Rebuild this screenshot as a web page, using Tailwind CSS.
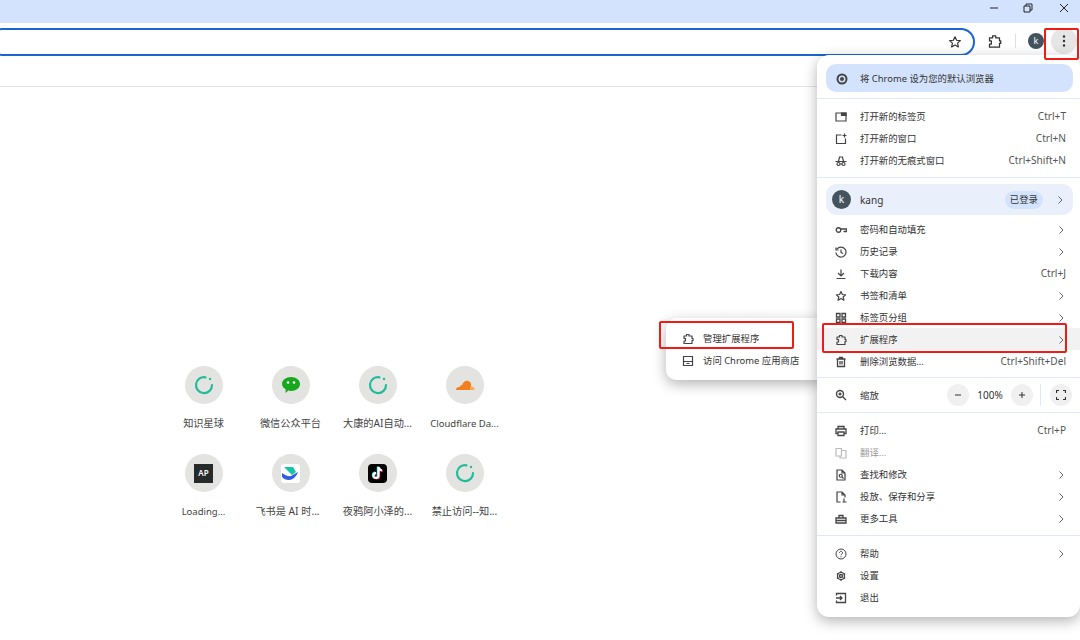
<!DOCTYPE html>
<html lang="zh-CN">
<head>
    <meta charset="UTF-8">
    <title>Chrome 菜单</title>
    <script src="https://cdn.jsdelivr.net/npm/@tailwindcss/browser@4"></script>
</head>
<body class="relative w-[1080px] h-[640px] overflow-hidden bg-white font-['Noto_Sans','Noto_Sans_CJK_SC',sans-serif] text-[#333]">
    <!-- Title bar -->
    <header class="h-[23px] bg-[#d3e3fd] flex items-center justify-end text-[#222]">
        <svg class="w-[12px] h-[12px] mr-[22px] -mt-2" viewBox="0 0 12 12" fill="none" stroke="currentColor"><path d="M2 6h8"/></svg>
        <svg class="w-[12px] h-[12px] mr-[24px] -mt-2" viewBox="0 0 12 12" fill="none" stroke="currentColor"><path d="M2 4h6v6H2zM4 4V2h6v6H8"/></svg>
        <svg class="w-[12px] h-[12px] mr-[10px] -mt-2" viewBox="0 0 12 12" fill="none" stroke="currentColor"><path d="M2 2l8 8M10 2l-8 8"/></svg>
    </header>

    <!-- Toolbar -->
    <div class="h-[36px] flex items-center">
        <div class="ml-[-12px] w-[987px] h-[28px] mt-[1px] border-2 border-[#1a66d0] rounded-[14px] flex items-center justify-end pr-[11px] shrink-0">
            <svg class="w-[14px] h-[14px] text-[#333]" viewBox="0 0 24 24" fill="none" stroke="currentColor" stroke-width="2" stroke-linejoin="round"><path d="M12 3l2.800 6 6.400.7-4.800 4.300 1.400 6.400L12 17.100l-5.800 3.300 1.400-6.400L2.800 9.700 9.200 9z"/></svg>
        </div>
        <svg class="w-[15px] h-[15px] ml-[12px] text-[#333]" viewBox="0 0 24 24" fill="none" stroke="currentColor" stroke-width="2" stroke-linejoin="round"><path d="M4 6h5V3h5v3h6v5h2v4h-2v6H4v-5h3v-5H4z"/></svg>
        <span class="w-px h-[14px] bg-[#d3e3fd] ml-[13px]"></span>
        <span class="w-[16px] h-[16px] ml-[12px] rounded-full bg-[#44545f] text-white text-[9px] flex items-center justify-center">k</span>
        <span class="w-[26px] h-[26px] ml-[7px] rounded-full bg-[#e6e6e6] flex items-center justify-center">
            <svg class="w-[4px] h-[14px]" viewBox="0 0 4 14" fill="#333"><circle cx="2" cy="2.500" r="1.200"/><circle cx="2" cy="7" r="1.200"/><circle cx="2" cy="11.500" r="1.200"/></svg>
        </span>
    </div>

    <!-- Bookmarks bar -->
    <div class="h-[28px] border-b border-[#e4e4e4]"></div>

    <!-- New tab page shortcuts -->
    <main class="ml-[160px] pt-[279px] grid grid-cols-[87px_87px_87px_87px] auto-rows-[88px] text-[10.200px] text-[#444]">
        <div class="flex flex-col items-center">
            <span class="w-[38px] h-[38px] rounded-full bg-[#e3e4e2] flex items-center justify-center">
                <svg class="w-[20px] h-[20px]" viewBox="0 0 20 20" fill="none" stroke="#22bd98" stroke-width="2.200" stroke-linecap="round"><path d="M11.500 2.300A8 8 0 1 0 18 10"/><circle cx="16" cy="4" r="1.200" fill="#22bd98" stroke="none"/></svg>
            </span>
            <span class="mt-[12px]">知识星球</span>
        </div>
        <div class="flex flex-col items-center">
            <span class="w-[38px] h-[38px] rounded-full bg-[#e3e4e2] flex items-center justify-center">
                <svg class="w-[20px] h-[20px]" viewBox="0 0 20 20"><path d="M10 2c5 0 9 3 9 7s-4 7-9 7c-1 0-1.800-.1-2.600-.4L4.500 18l.2-3.700C2.500 13 1 11.100 1 9c0-4 4-7 9-7z" fill="#18a81e"/><circle cx="7" cy="7.500" r="1.300" fill="#fff"/><circle cx="13" cy="7.500" r="1.300" fill="#fff"/></svg>
            </span>
            <span class="mt-[12px]">微信公众平台</span>
        </div>
        <div class="flex flex-col items-center">
            <span class="w-[38px] h-[38px] rounded-full bg-[#e3e4e2] flex items-center justify-center">
                <svg class="w-[20px] h-[20px]" viewBox="0 0 20 20" fill="none" stroke="#22bd98" stroke-width="2.200" stroke-linecap="round"><path d="M11.500 2.300A8 8 0 1 0 18 10"/><circle cx="16" cy="4" r="1.200" fill="#22bd98" stroke="none"/></svg>
            </span>
            <span class="mt-[12px]">大康的AI自动...</span>
        </div>
        <div class="flex flex-col items-center">
            <span class="w-[38px] h-[38px] rounded-full bg-[#e3e4e2] flex items-center justify-center">
                <svg class="w-[20px] h-[12px]" viewBox="0 0 20 12"><path d="M1 11c0-1.800 1.200-3 3-3 .3 0 .5 0 .7.100C5 6.800 6 6.200 7 6.300 8 3 10.200 1.500 12.500 1.800c2 .2 3.500 1.800 3.700 3.700l-1 5.500z" fill="#f38020"/><path d="M15 11l.7-3.300c2-.5 3.800.9 4 3.300z" fill="#fbad41"/></svg>
            </span>
            <span class="mt-[12px] text-[9.500px] leading-[15px]">Cloudflare Da...</span>
        </div>
        <div class="flex flex-col items-center">
            <span class="w-[38px] h-[38px] rounded-full bg-[#e3e4e2] flex items-center justify-center">
                <span class="w-[19px] h-[19px] bg-[#262a2b] text-white text-[8px] font-semibold flex items-center justify-center">AP</span>
            </span>
            <span class="mt-[12px] text-[9.500px] leading-[15px]">Loading...</span>
        </div>
        <div class="flex flex-col items-center">
            <span class="w-[38px] h-[38px] rounded-full bg-[#e3e4e2] flex items-center justify-center">
                <span class="w-[19px] h-[19px] rounded-[3px] bg-white flex items-center justify-center">
                    <svg class="w-[17px] h-[15px]" viewBox="0 0 17 15"><path d="M2 1h9l3 5-4 3z" fill="#14c4a6"/><path d="M0 7c3 2.500 6 3.500 9 3l7-4c-1.500 4-4.500 8-9 8-3 0-5.500-1-7-3z" fill="#2f5fe0"/></svg>
                </span>
            </span>
            <span class="mt-[12px] mr-[6px]">飞书是 AI 时...</span>
        </div>
        <div class="flex flex-col items-center">
            <span class="w-[38px] h-[38px] rounded-full bg-[#e3e4e2] flex items-center justify-center">
                <span class="w-[19px] h-[19px] rounded-[4px] bg-black flex items-center justify-center">
                    <svg class="w-[13px] h-[14px]" viewBox="0 0 13 14" fill="none" stroke-width="2"><path d="M7.500 1v8.500a2.500 2.500 0 1 1-2.500-2.500M7.500 1c.3 2 1.500 3.200 3.500 3.500" stroke="#25f4ee" transform="translate(-.7 -.4)"/><path d="M7.500 1v8.500a2.500 2.500 0 1 1-2.500-2.500M7.500 1c.3 2 1.500 3.200 3.500 3.500" stroke="#fe2c55" transform="translate(.7 .4)"/><path d="M7.500 1v8.500a2.500 2.500 0 1 1-2.500-2.500M7.500 1c.3 2 1.500 3.200 3.500 3.500" stroke="#fff"/></svg>
                </span>
            </span>
            <span class="mt-[12px]">夜鸦阿小泽的...</span>
        </div>
        <div class="flex flex-col items-center">
            <span class="w-[38px] h-[38px] rounded-full bg-[#e3e4e2] flex items-center justify-center">
                <svg class="w-[20px] h-[20px]" viewBox="0 0 20 20" fill="none" stroke="#22bd98" stroke-width="2.200" stroke-linecap="round"><path d="M11.500 2.300A8 8 0 1 0 18 10"/><circle cx="16" cy="4" r="1.200" fill="#22bd98" stroke="none"/></svg>
            </span>
            <span class="mt-[12px]">禁止访问--知...</span>
        </div>
    </main>

    <!-- Extensions submenu -->
    <div class="absolute left-[666px] top-[318px] w-[160px] h-[62px] bg-white rounded-[10px] shadow-[0_4px_14px_rgba(0,0,0,0.3)] py-[9px] text-[9.400px]">
        <div class="h-[22px] pt-[2px] flex items-center pl-[16px]">
            <svg class="w-[12px] h-[12px] text-[#444]" viewBox="0 0 24 24" fill="none" stroke="currentColor" stroke-width="2.400" stroke-linejoin="round"><path d="M4 6h5V3h5v3h6v5h2v4h-2v6H4v-5h3v-5H4z"/></svg>
            <span class="ml-[9px]">管理扩展程序</span>
        </div>
        <div class="h-[22px] pt-[2px] flex items-center pl-[16px]">
            <svg class="w-[12px] h-[12px] text-[#444]" viewBox="0 0 24 24" fill="none" stroke="currentColor" stroke-width="2.400"><path d="M3 3h18v18H3zM3 13h18M9 17h6"/></svg>
            <span class="ml-[9px]">访问 Chrome 应用商店</span>
        </div>
    </div>

    <!-- Main menu -->
    <div class="absolute left-[817px] top-[55px] w-[263px] h-[562px] bg-white rounded-[12px] shadow-[0_4px_14px_rgba(0,0,0,0.3)] text-[9.400px] pt-[9px]">
        <div class="mx-[9px] w-[247px] h-[28px] pt-[2px] rounded-[10px] bg-[#d3e3fd] flex items-center pl-[10px]">
            <svg class="w-[12px] h-[12px] text-[#444]" viewBox="0 0 24 24" fill="none" stroke="currentColor" stroke-width="4"><circle cx="12" cy="12" r="9"/><circle cx="12" cy="12" r="2" fill="currentColor"/></svg>
            <span class="ml-[12px]">将 Chrome 设为您的默认浏览器</span>
        </div>
        <div class="h-px bg-[#dde8fa] mt-[6px] mb-[6px]"></div>

        <div class="h-[22px] pt-[2px] flex items-center pl-[18px] pr-[14px]">
            <svg class="w-[12px] h-[12px] text-[#444]" viewBox="0 0 24 24" fill="none" stroke="currentColor" stroke-width="2.400"><path d="M2 4h20v16H2z"/><path d="M13 4h9v5h-9z" fill="currentColor"/></svg>
            <span class="ml-[13px]">打开新的标签页</span><span class="ml-auto text-[10.100px] text-[#555]">Ctrl+T</span>
        </div>
        <div class="h-[22px] pt-[2px] flex items-center pl-[18px] pr-[14px]">
            <svg class="w-[12px] h-[12px] text-[#444]" viewBox="0 0 24 24" fill="none" stroke="currentColor" stroke-width="2.400"><path d="M13 4H3v17h18V11M19 1v8M15 5h8"/></svg>
            <span class="ml-[13px]">打开新的窗口</span><span class="ml-auto text-[10.100px] text-[#555]">Ctrl+N</span>
        </div>
        <div class="h-[22px] pt-[2px] flex items-center pl-[18px] pr-[14px]">
            <svg class="w-[12px] h-[12px] text-[#444]" viewBox="0 0 24 24" fill="none" stroke="currentColor" stroke-width="2.400"><path d="M1 13h22M7 13l2-9h6l2 9"/><circle cx="7" cy="18" r="3"/><circle cx="17" cy="18" r="3"/><path d="M10 18h4"/></svg>
            <span class="ml-[13px]">打开新的无痕式窗口</span><span class="ml-auto text-[10.100px] text-[#555]">Ctrl+Shift+N</span>
        </div>
        <div class="h-px bg-[#dde8fa] mt-[6px] mb-[6px]"></div>

        <div class="mx-[9px] w-[247px] h-[31px] rounded-[10px] bg-[#e9f0fc] flex items-center pl-[6px] pr-[10px]">
            <span class="w-[19px] h-[19px] rounded-full bg-[#44545f] text-white text-[10px] flex items-center justify-center">k</span>
            <span class="ml-[9px] mt-[2px] text-[10px]">kang</span>
            <span class="ml-auto h-[18px] pt-[1px] px-[5px] rounded-full bg-[#d3e3fd] flex items-center">已登录</span>
            <svg class="w-[6px] h-[8px] ml-[14px] text-[#666]" viewBox="0 0 6 8" fill="none" stroke="currentColor"><path d="M1.500 .5L5 4 1.500 7.500"/></svg>
        </div>
        <div class="mt-[3px]">
            <div class="h-[22px] pt-[2px] flex items-center pl-[18px] pr-[16px]">
                <svg class="w-[12px] h-[12px] text-[#444]" viewBox="0 0 24 24" fill="none" stroke="currentColor" stroke-width="2.600"><circle cx="7" cy="12" r="4.500"/><path d="M12 10h11v5h-6"/></svg>
                <span class="ml-[13px]">密码和自动填充</span>
                <svg class="w-[6px] h-[8px] ml-auto text-[#666]" viewBox="0 0 6 8" fill="none" stroke="currentColor"><path d="M1.500 .5L5 4 1.500 7.500"/></svg>
            </div>
            <div class="h-[22px] pt-[2px] flex items-center pl-[18px] pr-[16px]">
                <svg class="w-[12px] h-[12px] text-[#444]" viewBox="0 0 24 24" fill="none" stroke="currentColor" stroke-width="2.400"><path d="M4 6a10 10 0 1 1-2 7M2 3v5h5M12 7v6l4 2"/></svg>
                <span class="ml-[13px]">历史记录</span>
                <svg class="w-[6px] h-[8px] ml-auto text-[#666]" viewBox="0 0 6 8" fill="none" stroke="currentColor"><path d="M1.500 .5L5 4 1.500 7.500"/></svg>
            </div>
            <div class="h-[22px] pt-[2px] flex items-center pl-[18px] pr-[14px]">
                <svg class="w-[12px] h-[12px] text-[#444]" viewBox="0 0 24 24" fill="none" stroke="currentColor" stroke-width="2.400"><path d="M12 3v12M6 10l6 6 6-6M3 21h18"/></svg>
                <span class="ml-[13px]">下载内容</span><span class="ml-auto text-[10.100px] text-[#555]">Ctrl+J</span>
            </div>
            <div class="h-[22px] pt-[2px] flex items-center pl-[18px] pr-[16px]">
                <svg class="w-[12px] h-[12px] text-[#444]" viewBox="0 0 24 24" fill="none" stroke="currentColor" stroke-width="2.400" stroke-linejoin="round"><path d="M12 3l2.800 6 6.400.7-4.800 4.300 1.400 6.400L12 17.100l-5.800 3.300 1.400-6.400L2.800 9.700 9.200 9z"/></svg>
                <span class="ml-[13px]">书签和清单</span>
                <svg class="w-[6px] h-[8px] ml-auto text-[#666]" viewBox="0 0 6 8" fill="none" stroke="currentColor"><path d="M1.500 .5L5 4 1.500 7.500"/></svg>
            </div>
            <div class="h-[22px] pt-[2px] flex items-center pl-[18px] pr-[16px]">
                <svg class="w-[12px] h-[12px] text-[#444]" viewBox="0 0 24 24" fill="none" stroke="currentColor" stroke-width="2.600"><path d="M3 3h7v7H3zM14 3h7v7h-7zM3 14h7v7H3zM14 14h7v7h-7z"/></svg>
                <span class="ml-[13px]">标签页分组</span>
                <svg class="w-[6px] h-[8px] ml-auto text-[#666]" viewBox="0 0 6 8" fill="none" stroke="currentColor"><path d="M1.500 .5L5 4 1.500 7.500"/></svg>
            </div>
            <div class="h-[22px] pt-[2px] flex items-center pl-[18px] pr-[16px] bg-[#f2f2f2]">
                <svg class="w-[12px] h-[12px] text-[#444]" viewBox="0 0 24 24" fill="none" stroke="currentColor" stroke-width="2.400" stroke-linejoin="round"><path d="M4 6h5V3h5v3h6v5h2v4h-2v6H4v-5h3v-5H4z"/></svg>
                <span class="ml-[13px]">扩展程序</span>
                <svg class="w-[6px] h-[8px] ml-auto text-[#666]" viewBox="0 0 6 8" fill="none" stroke="currentColor"><path d="M1.500 .5L5 4 1.500 7.500"/></svg>
            </div>
            <div class="h-[22px] pt-[2px] flex items-center pl-[18px] pr-[14px]">
                <svg class="w-[12px] h-[12px] text-[#444]" viewBox="0 0 24 24" fill="none" stroke="currentColor" stroke-width="2.600"><path d="M3 6h18M9 6V3h6v3M5 6v15h14V6M10 10v7M14 10v7"/></svg>
                <span class="ml-[13px]">删除浏览数据...</span><span class="ml-auto text-[10.100px] text-[#555]">Ctrl+Shift+Del</span>
            </div>
        </div>
        <div class="h-px bg-[#dde8fa] mt-[5px]"></div>

        <div class="h-[34px] flex items-center pl-[18px] pr-[8px]">
            <svg class="w-[12px] h-[12px] text-[#444]" viewBox="0 0 24 24" fill="none" stroke="currentColor" stroke-width="2.800"><circle cx="10" cy="10" r="7"/><path d="M15 15l7 7M7 10h6M10 7v6"/></svg>
            <span class="ml-[13px] mt-[2px]">缩放</span>
            <span class="ml-auto w-[22px] h-[22px] rounded-full bg-[#f0f0f0] flex items-center justify-center">
                <svg class="w-[8px] h-[8px]" viewBox="0 0 8 8" stroke="#333"><path d="M1 4h6"/></svg>
            </span>
            <span class="w-[42px] mt-[1px] text-center text-[10px]">100%</span>
            <span class="w-[22px] h-[22px] rounded-full bg-[#f0f0f0] flex items-center justify-center">
                <svg class="w-[8px] h-[8px]" viewBox="0 0 8 8" stroke="#333"><path d="M1 4h6M4 1v6"/></svg>
            </span>
            <span class="w-px h-[22px] bg-[#dde8fa] ml-[7px] mr-[9px]"></span>
            <span class="w-[22px] h-[22px] rounded-full bg-[#f0f0f0] flex items-center justify-center">
                <svg class="w-[10px] h-[10px]" viewBox="0 0 10 10" fill="none" stroke="#333" stroke-width="1.200"><path d="M.5 3V.5H3M7 .5h2.500V3M9.500 7v2.500H7M3 9.500H.5V7"/></svg>
            </span>
        </div>
        <div class="h-px bg-[#dde8fa] mb-[6px]"></div>

        <div class="h-[22px] pt-[2px] flex items-center pl-[18px] pr-[14px]">
            <svg class="w-[12px] h-[12px] text-[#444]" viewBox="0 0 24 24" fill="none" stroke="currentColor" stroke-width="2.600"><path d="M6 8V3h12v5M6 17H2V8h20v9h-4M6 14h12v7H6z"/></svg>
            <span class="ml-[13px]">打印...</span><span class="ml-auto text-[10.100px] text-[#555]">Ctrl+P</span>
        </div>
        <div class="h-[22px] pt-[2px] flex items-center pl-[18px] pr-[14px] text-[#999]">
            <svg class="w-[12px] h-[12px] text-[#bbb]" viewBox="0 0 24 24" fill="none" stroke="currentColor" stroke-width="2.400"><path d="M2 3h11v15H2zM13 7h9v15H10v-4"/></svg>
            <span class="ml-[13px]">翻译...</span>
        </div>
        <div class="h-[22px] pt-[2px] flex items-center pl-[18px] pr-[16px]">
            <svg class="w-[12px] h-[12px] text-[#444]" viewBox="0 0 24 24" fill="none" stroke="currentColor" stroke-width="2.400"><path d="M14 2H4v20h16V8zM14 2v6h6"/><circle cx="11.500" cy="13.500" r="3"/><path d="M14 16l3 3"/></svg>
            <span class="ml-[13px]">查找和修改</span>
            <svg class="w-[6px] h-[8px] ml-auto text-[#666]" viewBox="0 0 6 8" fill="none" stroke="currentColor"><path d="M1.500 .5L5 4 1.500 7.500"/></svg>
        </div>
        <div class="h-[22px] pt-[2px] flex items-center pl-[18px] pr-[16px]">
            <svg class="w-[12px] h-[12px] text-[#444]" viewBox="0 0 24 24" fill="none" stroke="currentColor" stroke-width="2.400"><path d="M11 22H4V2h10l6 6v5M14 2v6h6M18 15v7M15 22h8"/></svg>
            <span class="ml-[13px]">投放、保存和分享</span>
            <svg class="w-[6px] h-[8px] ml-auto text-[#666]" viewBox="0 0 6 8" fill="none" stroke="currentColor"><path d="M1.500 .5L5 4 1.500 7.500"/></svg>
        </div>
        <div class="h-[22px] pt-[2px] flex items-center pl-[18px] pr-[16px]">
            <svg class="w-[12px] h-[12px] text-[#444]" viewBox="0 0 24 24" fill="none" stroke="currentColor" stroke-width="2.600"><path d="M2 10h20v10H2zM8 10V5h8v5M2 15h20"/></svg>
            <span class="ml-[13px]">更多工具</span>
            <svg class="w-[6px] h-[8px] ml-auto text-[#666]" viewBox="0 0 6 8" fill="none" stroke="currentColor"><path d="M1.500 .5L5 4 1.500 7.500"/></svg>
        </div>
        <div class="h-px bg-[#dde8fa] mt-[6px] mb-[6px]"></div>

        <div class="h-[22px] pt-[2px] flex items-center pl-[18px] pr-[16px]">
            <svg class="w-[12px] h-[12px] text-[#444]" viewBox="0 0 24 24" fill="none" stroke="currentColor" stroke-width="2"><circle cx="12" cy="12" r="10"/><path d="M9 9.500a3 3 0 1 1 4.500 2.600c-1 .6-1.500 1.200-1.500 2.400M12 16.500v2"/></svg>
            <span class="ml-[13px]">帮助</span>
            <svg class="w-[6px] h-[8px] ml-auto text-[#666]" viewBox="0 0 6 8" fill="none" stroke="currentColor"><path d="M1.500 .5L5 4 1.500 7.500"/></svg>
        </div>
        <div class="h-[22px] pt-[2px] flex items-center pl-[18px] pr-[16px]">
            <svg class="w-[12px] h-[12px] text-[#444]" viewBox="0 0 24 24" fill="none" stroke="currentColor" stroke-width="3"><circle cx="12" cy="12" r="3"/><path d="M12 2.500v3M12 18.500v3M3.800 7.300l2.600 1.500M17.600 15.200l2.600 1.500M3.800 16.700l2.600-1.500M17.600 8.800l2.600-1.500"/><circle cx="12" cy="12" r="7" stroke-width="2.400"/></svg>
            <span class="ml-[13px]">设置</span>
        </div>
        <div class="h-[22px] pt-[2px] flex items-center pl-[18px] pr-[16px]">
            <svg class="w-[12px] h-[12px] text-[#444]" viewBox="0 0 24 24" fill="none" stroke="currentColor" stroke-width="2.600"><path d="M3 7V3h18v18H3v-4M2 12h12M10 8l4 4-4 4"/></svg>
            <span class="ml-[13px]">退出</span>
        </div>
    </div>

    <!-- Red annotation boxes -->
    <div class="absolute left-[1044px] top-[28px] w-[35px] h-[32px] border-2 border-[#ee1c14] rounded-[2px]"></div>
    <div class="absolute left-[822px] top-[323px] w-[245px] h-[30px] border-2 border-[#ee1c14] rounded-[2px]"></div>
    <div class="absolute left-[659px] top-[321px] w-[135px] h-[28px] border-2 border-[#ee1c14] rounded-[2px]"></div>
</body>
</html>
